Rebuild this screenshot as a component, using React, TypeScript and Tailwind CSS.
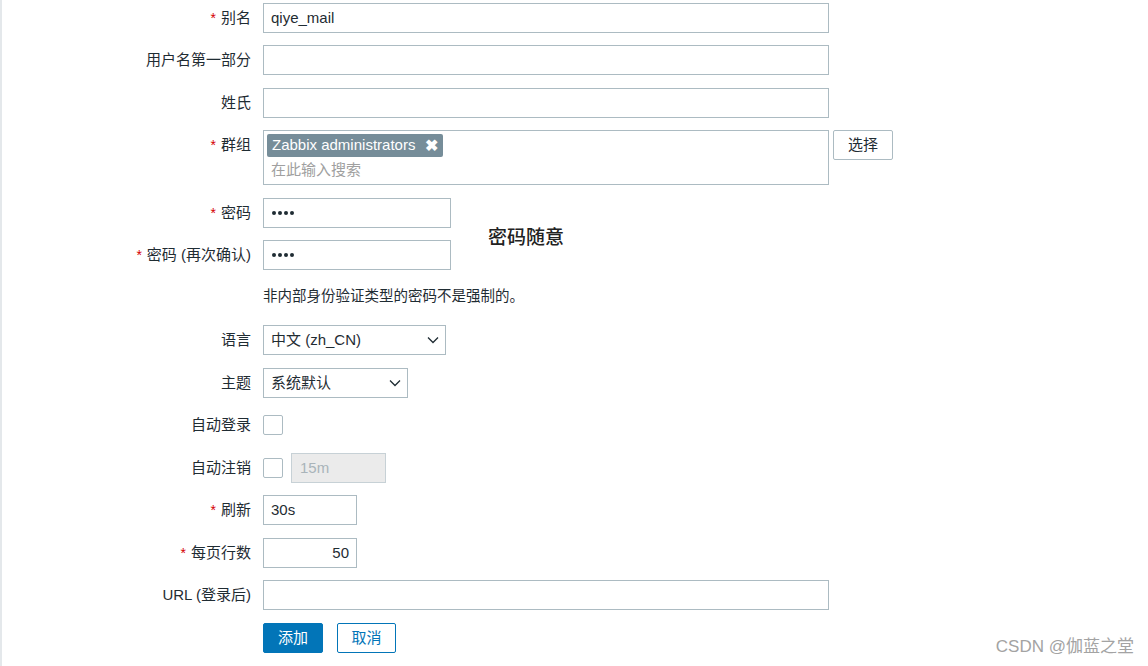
import React from "react";

const FONT = '"Liberation Sans", Arial, "Noto Sans CJK SC", sans-serif';

function Label({ text, required }: { text: string; required?: boolean }) {
  return (
    <div className="flex h-[30px] w-[249px] shrink-0 items-center justify-end text-[15px] text-[#1f2c33]">
      {required && <span className="mr-[5px] text-[14px] text-[#d40000]">*</span>}
      {text}
    </div>
  );
}

function Row({
  label,
  required,
  mt,
  children,
}: {
  label: string;
  required?: boolean;
  mt: string;
  children?: React.ReactNode;
}) {
  return (
    <div className={`flex items-start ${mt}`}>
      <Label text={label} required={required} />
      <div className="ml-[12px] flex items-center">{children}</div>
    </div>
  );
}

function TextBox({ value, width, right }: { value?: string; width: string; right?: boolean }) {
  return (
    <div
      className={`flex h-[30px] ${width} items-center border border-[#acbbc2] bg-white px-[7px] text-[15px] text-[#1f2c33] ${
        right ? "justify-end" : ""
      }`}
    >
      {value}
    </div>
  );
}

function Dots() {
  return (
    <div className="flex h-[30px] w-[188px] items-center gap-[2px] border border-[#acbbc2] bg-white px-[8px]">
      {[0, 1, 2, 3].map((i) => (
        <span key={i} className="h-[4px] w-[4px] rounded-full bg-[#1f2c33]" />
      ))}
    </div>
  );
}

function Select({ value, width }: { value: string; width: string }) {
  return (
    <div
      className={`flex h-[30px] ${width} items-center justify-between border border-[#acbbc2] bg-white pl-[7px] pr-[6px] text-[15px] text-[#1f2c33]`}
    >
      <span>{value}</span>
      <svg width="12" height="8" viewBox="0 0 12 8" fill="none">
        <path d="M1 1.5l5 5 5-5" stroke="#1f2c33" strokeWidth="1.3" />
      </svg>
    </div>
  );
}

function Checkbox() {
  return <div className="h-[20px] w-[20px] rounded-[2px] border border-[#acbbc2] bg-white" />;
}

export default function App() {
  return (
    <div
      className="relative h-[666px] w-[1148px] overflow-hidden border-l-2 border-[#e4e8eb] bg-white pt-[3px]"
      style={{ fontFamily: FONT }}
    >
      <Row label="别名" required mt="mt-0">
        <TextBox value="qiye_mail" width="w-[566px]" />
      </Row>
      <Row label="用户名第一部分" mt="mt-[12px]">
        <TextBox width="w-[566px]" />
      </Row>
      <Row label="姓氏" mt="mt-[13px]">
        <TextBox width="w-[566px]" />
      </Row>

      <Row label="群组" required mt="mt-[12px]">
        <div className="flex items-start gap-[4px]">
          <div className="flex h-[55px] w-[566px] flex-col border border-[#acbbc2] bg-white px-[3px] pt-[3px]">
            <div className="flex h-[23px] w-fit items-center rounded-[2px] bg-[#768d99] pl-[5px] pr-[5px] text-[15px] text-white">
              <span>Zabbix administrators</span>
              <span className="ml-[10px] text-[16px] font-bold leading-none">✖</span>
            </div>
            <div className="mt-[2px] pl-[4px] text-[15px] text-[#a0a0a0]">在此输入搜索</div>
          </div>
          <div className="flex h-[30px] w-[60px] items-center justify-center rounded-[2px] border border-[#acbbc2] bg-white text-[15px] text-[#1f2c33]">
            选择
          </div>
        </div>
      </Row>

      <div className="relative">
        <Row label="密码" required mt="mt-[13px]">
          <Dots />
        </Row>
        <Row label="密码 (再次确认)" required mt="mt-[12px]">
          <Dots />
        </Row>
        <div className="absolute left-[486px] top-[26px] text-[19px] font-medium text-[#222]">密码随意</div>
      </div>

      <Row label="" mt="mt-[12px]">
        <div className="flex h-[30px] items-center text-[14.5px] text-[#1f2c33]">
          非内部身份验证类型的密码不是强制的。
        </div>
      </Row>

      <Row label="语言" mt="mt-[13px]">
        <Select value="中文 (zh_CN)" width="w-[183px]" />
      </Row>
      <Row label="主题" mt="mt-[13px]">
        <Select value="系统默认" width="w-[145px]" />
      </Row>
      <Row label="自动登录" mt="mt-[12px]">
        <div className="flex h-[30px] items-center">
          <Checkbox />
        </div>
      </Row>
      <Row label="自动注销" mt="mt-[13px]">
        <div className="flex h-[30px] items-center gap-[8px]">
          <Checkbox />
          <div className="flex h-[30px] w-[95px] items-center border border-[#c7d1d6] bg-[#ebebeb] px-[8px] text-[15px] text-[#a9b4ba]">
            15m
          </div>
        </div>
      </Row>
      <Row label="刷新" required mt="mt-[12px]">
        <TextBox value="30s" width="w-[94px]" />
      </Row>
      <Row label="每页行数" required mt="mt-[13px]">
        <TextBox value="50" width="w-[94px]" right />
      </Row>
      <Row label="URL (登录后)" mt="mt-[12px]">
        <TextBox width="w-[566px]" />
      </Row>
      <Row label="" mt="mt-[13px]">
        <div className="flex gap-[14px]">
          <div className="flex h-[30px] w-[60px] items-center justify-center rounded-[2px] border border-[#0275b8] bg-[#0275b8] text-[15px] text-white">
            添加
          </div>
          <div className="flex h-[30px] w-[59px] items-center justify-center rounded-[2px] border border-[#0275b8] bg-white text-[15px] text-[#0275b8]">
            取消
          </div>
        </div>
      </Row>

      <div className="absolute bottom-[7px] right-[14px] text-[17px] text-[#a3a3a3]">CSDN @伽蓝之堂</div>
    </div>
  );
}
